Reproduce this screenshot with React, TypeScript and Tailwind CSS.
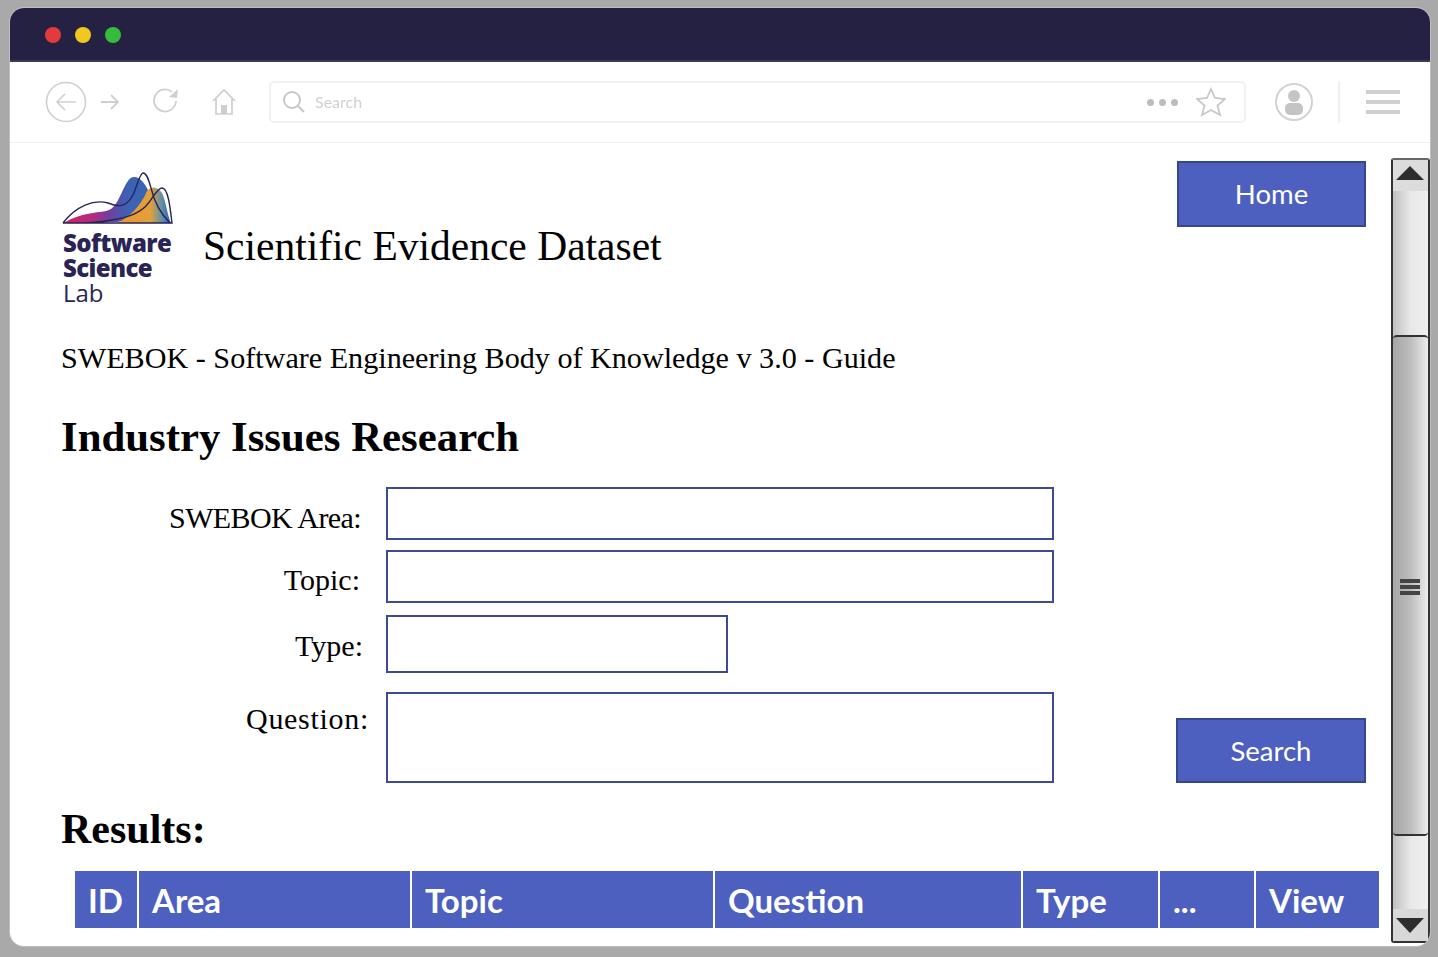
import React from "react";

const serif = "font-['Liberation_Serif','Noto_Serif',serif]";
const sans = "font-['Lato','Noto_Sans',sans-serif]";
const logoFont = "font-['Open_Sans','Noto_Sans',sans-serif]";

function Logo() {
  return (
    <div className="w-[112px] flex flex-col">
      <svg width="112" height="54" viewBox="0 0 112 54" className="block">
        <defs>
          <linearGradient id="lg1" gradientUnits="userSpaceOnUse" x1="1" x2="66" y1="0" y2="0">
            <stop offset="0" stopColor="#d4245f" />
            <stop offset="0.45" stopColor="#b5297f" />
            <stop offset="0.72" stopColor="#70409f" />
            <stop offset="1" stopColor="#3a62b5" />
          </linearGradient>
          <linearGradient id="lg2" gradientUnits="userSpaceOnUse" x1="56" x2="108" y1="0" y2="0">
            <stop offset="0" stopColor="#e8962b" />
            <stop offset="0.62" stopColor="#e3a03a" />
            <stop offset="0.85" stopColor="#5f8fa8" />
            <stop offset="1" stopColor="#3060c8" />
          </linearGradient>
        </defs>
        <path d="M1 51 C12 45 22 42 31 41 C42 39 48 40 53 33 C60 24 64 5 72 5 C78 4 84 13 88 22 L70 46 L56 50 L30 51 Z" fill="url(#lg1)" />
        <path d="M56 51 C66 45 78 36 85 19 C90 13 96 15 100 21 C104 29 105 42 109 51 Z" fill="url(#lg2)" />
        <path d="M1 51 C14 34 32 27 46 31 C56 35 64 36 71 23 C75 14 78 1 81 1 C85 1 87 9 89 16 C92 29 98 41 108 51" fill="none" stroke="#2a2456" strokeWidth="1.4" />
        <path d="M1 51 C20 51.500 40 50 50 48 C64 46 76 42 84 34 C90 28 95 16 100 16 C106 16 108 34 110 51 L1 51" fill="none" stroke="#2a2456" strokeWidth="1.4" />
      </svg>
      <div className={`${logoFont} text-[#2a2456] text-[24px] leading-[25px] font-extrabold mt-[4px] pl-[1px] tracking-[-0.6px] whitespace-nowrap`}>
        Software
        <br />
        Science
        <br />
        <span className="font-normal tracking-normal">Lab</span>
      </div>
    </div>
  );
}

function Toolbar() {
  const stroke = "#cfcfcf";
  return (
    <div className="h-[81px] shrink-0 flex items-center border-b border-[#eeeeee] bg-white pl-[35px]">
      <svg width="42" height="42" viewBox="0 0 42 42" fill="none" stroke={stroke} strokeWidth="1.6" className="shrink-0 blur-[0.4px]">
        <circle cx="21" cy="21" r="19.500" />
        <path d="M31 21H12M20 13l-8 8 8 8" />
      </svg>
      <svg width="20" height="18" viewBox="0 0 20 18" fill="none" stroke={stroke} strokeWidth="1.8" className="ml-[13px] shrink-0 blur-[0.4px]">
        <path d="M1 9h17M11 2l7 7-7 7" />
      </svg>
      <svg width="28" height="28" viewBox="0 0 28 28" fill="none" stroke={stroke} strokeWidth="1.8" className="ml-[32px] shrink-0 blur-[0.4px]">
        <path d="M24 13a11 11 0 1 1-4-9" />
        <path d="M26 1l-1 9-8-1z" fill={stroke} stroke="none" />
      </svg>
      <svg width="26" height="28" viewBox="0 0 26 28" fill="none" stroke={stroke} strokeWidth="1.7" className="ml-[31px] shrink-0 blur-[0.4px]">
        <path d="M2 13L13 2l11 11M5 11v15h16V11" />
        <rect x="10" y="17" width="6" height="9" fill={stroke} stroke="none" />
      </svg>
      <div className="ml-[32px] w-[977px] h-[42px] shrink-0 border-2 border-[#f1f1f1] rounded-[5px] flex items-center pl-[11px] pr-[18px]">
        <svg width="24" height="24" viewBox="0 0 24 24" fill="none" stroke="#c8c8c8" strokeWidth="2" className="shrink-0 blur-[0.4px]">
          <circle cx="10" cy="10" r="8" />
          <path d="M16 16l6 6" />
        </svg>
        <span className={`${sans} ml-[9px] text-[16px] text-[#d0d0d0] blur-[0.4px]`}>Search</span>
        <div className="ml-auto flex gap-[5px] blur-[0.4px]">
          <div className="w-[7px] h-[7px] rounded-full bg-[#bdbdbd]" />
          <div className="w-[7px] h-[7px] rounded-full bg-[#bdbdbd]" />
          <div className="w-[7px] h-[7px] rounded-full bg-[#bdbdbd]" />
        </div>
        <svg width="30" height="30" viewBox="0 0 30 30" fill="none" stroke="#c8c8c8" strokeWidth="1.8" className="ml-[18px] shrink-0 blur-[0.4px]">
          <path d="M15 2l4 9 10 1-7.500 6.500L24 28l-9-5-9 5 2.500-9.500L1 12l10-1z" />
        </svg>
      </div>
      <svg width="40" height="40" viewBox="0 0 40 40" className="ml-[28px] shrink-0 blur-[0.4px]">
        <circle cx="20" cy="20" r="18" fill="none" stroke="#d2d2d2" strokeWidth="2" />
        <circle cx="20" cy="14" r="6" fill="#c4c4c4" />
        <rect x="11" y="21" width="18" height="12" rx="5" fill="#c4c4c4" />
      </svg>
      <div className="ml-[24px] w-[2px] h-[42px] bg-[#f0f0f0] shrink-0" />
      <div className="ml-[26px] w-[34px] flex flex-col gap-[6px] shrink-0 blur-[0.4px]">
        <div className="h-[4px] bg-[#cfcfcf]" />
        <div className="h-[4px] bg-[#cfcfcf]" />
        <div className="h-[4px] bg-[#cfcfcf]" />
      </div>
    </div>
  );
}

function Scrollbar() {
  return (
    <div className="w-[39px] shrink-0 mt-[15px] mb-[3px] border-2 border-[#333333] border-t-[#666666] rounded-[3px] flex flex-col bg-gradient-to-r from-[#c0c0c0] via-[#e8e8e8] to-[#f0f0f0]">
      <div className="h-[31px] bg-[#dcdcdc] flex justify-center pt-[6px] pr-[2px] shrink-0">
        <svg width="28" height="14" viewBox="0 0 28 14"><path d="M14 0L28 14H0z" fill="#2d2d2d" /></svg>
      </div>
      <div className="h-[144px] shrink-0" />
      <div className="h-[501px] shrink-0 border-b-2 border-t-2 border-[#333333] rounded-[4px] bg-gradient-to-r from-[#a6a6a6] via-[#bdbdbd] to-[#eeeeee] flex items-center justify-center">
        <div className="w-[20px] flex flex-col gap-[2px] mt-[3px] mr-[2px]">
          <div className="h-[4px] bg-[#444444]" />
          <div className="h-[4px] bg-[#444444]" />
          <div className="h-[4px] bg-[#444444]" />
        </div>
      </div>
      <div className="flex-1" />
      <div className="h-[32px] bg-[#d8d8d8] flex justify-center pt-[9px] pr-[2px] shrink-0">
        <svg width="28" height="15" viewBox="0 0 28 15"><path d="M0 0H28L14 15z" fill="#2d2d2d" /></svg>
      </div>
    </div>
  );
}

function Field({ label, labelEnd, h, w, mt, top, track }: { label: string; labelEnd: number; h: number; w: number; mt: number; top: number; track: number }) {
  return (
    <div className="flex" style={{ marginTop: mt }}>
      <div className="w-[325px] shrink-0 text-right" style={{ paddingRight: 325 - labelEnd, paddingTop: top }}>
        <span className={`${serif} text-[30px] leading-[36px] text-black`} style={{ letterSpacing: track }}>{label}</span>
      </div>
      <div className="border-2 border-[#3d4b95] bg-white shrink-0" style={{ width: w, height: h }} />
    </div>
  );
}

const cols = [
  { t: "ID", w: 62 },
  { t: "Area", w: 271 },
  { t: "Topic", w: 301 },
  { t: "Question", w: 306 },
  { t: "Type", w: 135 },
  { t: "...", w: 94 },
  { t: "View", w: 123 },
];

export default function App() {
  return (
    <div className="w-[1438px] h-[957px] bg-[#a9a9a9] pt-[8px] pl-[10px] overflow-hidden">
      <div className="w-[1420px] h-[938px] bg-white rounded-[14px] overflow-hidden flex flex-col shadow-[0_0_0_1px_#bdbdc6]">
        <div className="h-[54px] shrink-0 bg-[#242143] border-b-2 border-[#3b3764] flex items-center pl-[35px] pt-[2px] gap-[14px]">
          <div className="w-[16px] h-[16px] rounded-full bg-[#e23b3b]" />
          <div className="w-[16px] h-[16px] rounded-full bg-[#f2c71f]" />
          <div className="w-[16px] h-[16px] rounded-full bg-[#33bd3a]" />
        </div>
        <Toolbar />
        <div className="flex-1 flex min-h-0">
          <div className="w-[1381px] shrink-0 flex flex-col">
            <div className="flex items-start pl-[52px] pr-[25px] pt-[18px]">
              <div className="flex items-start pt-[11px]">
                <Logo />
                <h1 className={`${serif} ml-[29px] mt-[50px] text-[41.500px] leading-[48px] font-normal text-black whitespace-nowrap`}>Scientific Evidence Dataset</h1>
              </div>
              <button className={`${sans} ml-auto w-[189px] h-[66px] bg-[#4e60bf] border-2 border-[#36468f] text-white text-[27.500px]`}>Home</button>
            </div>
            <p className={`${serif} pl-[51px] mt-[35px] text-[30.150px] leading-[36px] text-black whitespace-nowrap`}>SWEBOK - Software Engineering Body of Knowledge v 3.0 - Guide</p>
            <h2 className={`${serif} pl-[51px] mt-[37px] text-[42.800px] leading-[48px] font-bold text-black whitespace-nowrap`}>Industry Issues Research</h2>
            <div className="pl-[51px] flex">
              <div className="flex flex-col">
                <Field label="SWEBOK Area:" labelEnd={300} h={53} w={668} mt={26} top={13} track={-0.6} />
                <Field label="Topic:" labelEnd={299} h={53} w={668} mt={10} top={12} track={0} />
                <Field label="Type:" labelEnd={302} h={58} w={342} mt={12} top={13} track={0} />
                <Field label="Question:" labelEnd={308} h={91} w={668} mt={19} top={9} track={0.7} />
              </div>
              <div className="flex-1 flex justify-end items-end pr-[25px]">
                <button className={`${sans} w-[190px] h-[65px] pt-[1px] bg-[#4e60bf] border-2 border-[#36468f] text-white text-[27.500px]`}>Search</button>
              </div>
            </div>
            <h2 className={`${serif} pl-[51px] mt-[22px] text-[42px] leading-[48px] font-bold text-black`}>Results:</h2>
            <div className="ml-[65px] mt-[18px] flex gap-[2px] w-[1305px]">
              {cols.map((c) => (
                <div key={c.t} className={`${sans} h-[57px] bg-[#4e60bf] text-white text-[33px] font-bold pl-[13px] pt-[2px] flex items-center shrink-0 leading-none`} style={{ width: c.w }}>
                  {c.t}
                </div>
              ))}
            </div>
          </div>
          <Scrollbar />
        </div>
      </div>
    </div>
  );
}
